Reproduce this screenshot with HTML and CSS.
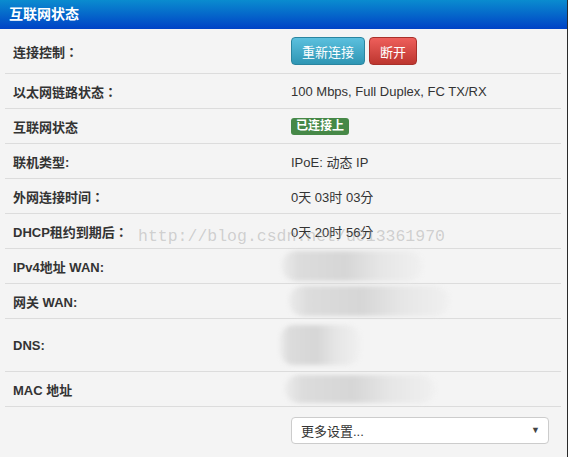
FILE: index.html
```html
<!DOCTYPE html>
<html lang="zh-CN">
<head>
    <meta charset="UTF-8">
    <title>互联网状态</title>
    <link rel="stylesheet" href="styles.css">
</head>
<body>
    <div class="panel">
        <div class="panel-title">互联网状态</div>
        <div class="rows" lang="zh-TW">
            <div class="row row-tall">
                <div class="label">连接控制：</div>
                <div class="value">
                    <button class="btn btn-info">重新连接</button>
                    <button class="btn btn-danger">断开</button>
                </div>
            </div>
            <div class="row">
                <div class="label">以太网链路状态：</div>
                <div class="value">100 Mbps, Full Duplex, FC TX/RX</div>
            </div>
            <div class="row">
                <div class="label">互联网状态</div>
                <div class="value"><span class="badge">已连接上</span></div>
            </div>
            <div class="row">
                <div class="label">联机类型:</div>
                <div class="value">IPoE: 动态 IP</div>
            </div>
            <div class="row">
                <div class="label">外网连接时间：</div>
                <div class="value">0天 03时 03分</div>
            </div>
            <div class="row">
                <div class="label">DHCP租约到期后：</div>
                <div class="value">0天 20时 56分</div>
            </div>
            <div class="row">
                <div class="label">IPv4地址 WAN:</div>
                <div class="value"><span class="blur blur-a"></span></div>
            </div>
            <div class="row">
                <div class="label">网关 WAN:</div>
                <div class="value"><span class="blur blur-b"></span></div>
            </div>
            <div class="row row-dns">
                <div class="label">DNS:</div>
                <div class="value"><span class="blur blur-c"></span></div>
            </div>
            <div class="row">
                <div class="label">MAC 地址</div>
                <div class="value"><span class="blur blur-d"></span></div>
            </div>
            <div class="row row-last">
                <div class="label"></div>
                <div class="value">
                    <div class="select">
                        <span>更多设置...</span>
                        <span class="caret">&#9660;</span>
                    </div>
                </div>
            </div>
        </div>
        <div class="watermark">http://blog.csdn.net/u013361970</div>
    </div>
</body>
</html>
```

FILE: styles.css
```css
body {
    margin: 0;
    background: #f4f4f4;
    font-family: "Liberation Sans", "Noto Sans CJK SC", sans-serif;
    font-size: 13px;
    color: #333;
}
.panel {
    position: relative;
    width: 567px;
    height: 457px;
    border-right: 1px solid #2a2a2a;
    background: #f4f4f4;
    overflow: hidden;
}
.panel-title {
    height: 29px;
    line-height: 28px;
    padding-left: 9px;
    color: #fff;
    font-weight: bold;
    font-size: 14px;
    background: linear-gradient(#0a8ccf, #0042c6);
}
.rows {
    margin: 0 6px 0 5px;
}
.row {
    display: grid;
    grid-template-columns: 286px 1fr;
    align-items: center;
    height: 34px;
    border-bottom: 1px solid #dcdcdc;
}
.row-tall {
    height: 44px;
}
.row-dns {
    height: 52px;
}
.row-last {
    height: 49px;
    border-bottom: none;
}
.label {
    padding-left: 8px;
    font-family: "Liberation Sans", "Noto Sans CJK TC", sans-serif;
    font-weight: bold;
}
.value {
    display: flex;
    align-items: center;
    gap: 4px;
}
.btn {
    height: 28px;
    padding: 0 8px;
    border-radius: 4px;
    font-family: "Noto Sans CJK SC", sans-serif;
    font-size: 13px;
    color: #fff;
    cursor: pointer;
}
.btn-info {
    width: 74px;
    background: linear-gradient(#5bc0de, #2f96b4);
    border: 1px solid #2a85a0;
}
.btn-danger {
    width: 48px;
    background: linear-gradient(#ee5f5b, #bd362f);
    border: 1px solid #a8302a;
}
.badge {
    display: inline-block;
    padding: 0 5px;
    height: 17px;
    line-height: 17px;
    border-radius: 3px;
    background: #468847;
    color: #fff;
    font-weight: bold;
    font-size: 12px;
}
.blur {
    display: block;
    margin-left: -9px;
    border-radius: 14px;
    background: linear-gradient(90deg, #ebebeb 0%, #dcdcdc 12%, #d6d6d6 45%, #e6e6e6 70%, #f0f0f0 100%);
    filter: blur(2px);
}
.blur-a {
    width: 140px;
    height: 30px;
}
.blur-b {
    width: 160px;
    height: 30px;
    margin-left: -2px;
}
.blur-c {
    width: 80px;
    height: 40px;
    margin-left: -11px;
}
.blur-d {
    width: 150px;
    height: 28px;
    margin-left: -6px;
}
.select {
    display: flex;
    align-items: center;
    justify-content: space-between;
    width: 258px;
    height: 27px;
    margin-top: -3px;
    padding: 0 8px 0 9px;
    box-sizing: border-box;
    background: #fff;
    border: 1px solid #ccc;
    border-radius: 4px;
}
.caret {
    font-size: 9px;
    color: #444;
}
.watermark {
    position: absolute;
    left: 138px;
    top: 227px;
    font-family: "Liberation Mono", monospace;
    font-size: 16.5px;
    color: rgba(150, 150, 150, 0.4);
    pointer-events: none;
}
```
